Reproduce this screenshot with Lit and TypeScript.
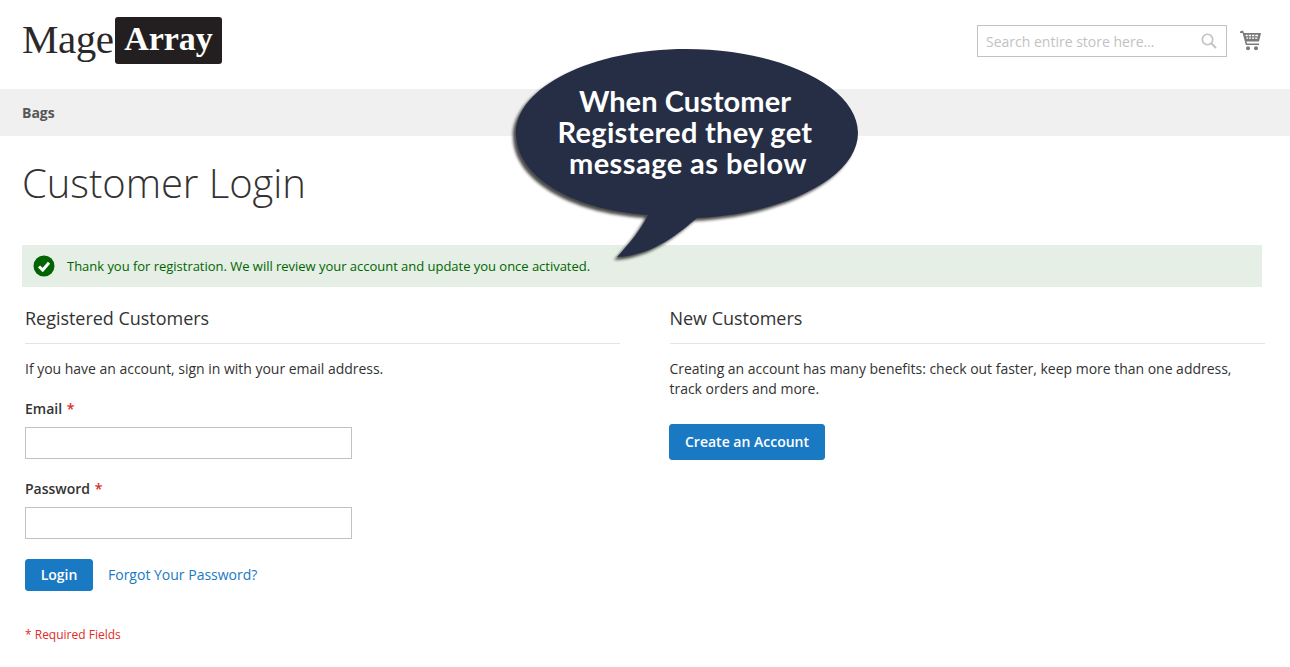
import { LitElement, html, css } from 'lit';
import { customElement } from 'lit/decorators.js';

@customElement('app-root')
export class AppRoot extends LitElement {
  static styles = css`
    :host {
      display: block;
      position: relative;
      height: 667px;
      overflow: hidden;
      background: #fff;
      color: #333;
      font-family: "Open Sans", sans-serif;
      font-size: 14px;
      line-height: 20px;
    }

    .header {
      height: 89px;
      padding: 17px 29px 0 22px;
      box-sizing: border-box;
      display: flex;
      justify-content: space-between;
      align-items: flex-start;
    }

    .logo {
      display: flex;
      align-items: flex-start;
      font-family: "Liberation Serif", serif;
    }

    .logo-mage {
      font-size: 41px;
      line-height: 45px;
      letter-spacing: -0.5px;
      color: #2b2829;
      width: 93px;
    }

    .logo-array {
      width: 107px;
      height: 47px;
      background: #231f20;
      border-radius: 3px;
      color: #fff;
      font-size: 34px;
      font-weight: 700;
      line-height: 43px;
      text-align: center;
    }

    .tools {
      display: flex;
      align-items: center;
      gap: 13px;
      margin-top: 8px;
    }

    .search {
      width: 250px;
      height: 32px;
      box-sizing: border-box;
      border: 1px solid #c2c2c2;
      padding: 1px 9px 0 8px;
      display: flex;
      align-items: center;
      justify-content: space-between;
      color: #c2c2c2;
      font-size: 14px;
    }

    .search svg {
      margin-top: -2px;
    }

    .cart {
      margin-top: -2px;
    }

    .nav {
      height: 47px;
      background: #f0f0f0;
      padding: 0 22px;
      display: flex;
      align-items: center;
      font-weight: 700;
      color: #575757;
    }

    h1 {
      margin: 0;
      padding: 18px 22px 0;
      height: 109px;
      box-sizing: border-box;
      font-size: 40px;
      line-height: 57px;
      font-weight: 300;
      letter-spacing: -0.05px;
      color: #333;
    }

    .message {
      margin: 0 28px 0 22px;
      height: 42px;
      background: #e5efe5;
      color: #006400;
      font-size: 13px;
      letter-spacing: -0.025px;
      padding-left: 11px;
      display: flex;
      align-items: center;
      gap: 12px;
    }

    .columns {
      display: grid;
      grid-template-columns: 595px 595.5px;
      column-gap: 49.5px;
      padding: 0 25px;
    }

    h2 {
      margin: 0;
      padding: 20px 0 13px;
      font-size: 18px;
      line-height: 23px;
      font-weight: 400;
      letter-spacing: -0.03px;
      border-bottom: 1px solid #e4e4e4;
    }

    p {
      margin: 15px 0 0;
      letter-spacing: -0.02px;
    }

    label {
      display: block;
      margin-top: 20px;
      font-weight: 600;
    }

    label span {
      color: #e02b27;
      margin-left: 1px;
    }

    .input {
      width: 327px;
      height: 32px;
      box-sizing: border-box;
      border: 1px solid #c2c2c2;
      margin-top: 8px;
      background: #fff;
    }

    .actions {
      display: flex;
      align-items: center;
      gap: 15px;
      margin-top: 20px;
    }

    .btn {
      display: inline-flex;
      align-items: center;
      justify-content: center;
      width: 68px;
      height: 32px;
      background: #1979c3;
      border: 1px solid #1979c3;
      border-radius: 3px;
      box-sizing: border-box;
      color: #fff;
      font-weight: 600;
      white-space: nowrap;
    }

    .btn.create {
      height: 36px;
      margin-top: 25px;
      width: 156px;
      margin-left: -0.5px;
    }

    a {
      color: #1979c3;
      text-decoration: none;
    }

    .required {
      margin-top: 34px;
      font-size: 12px;
      color: #e02b27;
    }

    .bubble {
      position: absolute;
      left: 505px;
      top: 42px;
      width: 365px;
      height: 225px;
      filter: drop-shadow(-3px 3px 1.5px rgba(0, 0, 0, 0.7));
    }

    .bubble-text {
      position: absolute;
      left: 515px;
      top: 85px;
      width: 340px;
      text-align: center;
      color: #fff;
      font-family: Lato, sans-serif;
      font-size: 29px;
      line-height: 31px;
      font-weight: 700;
      letter-spacing: 0.3px;
    }

    .bubble-text .first {
      letter-spacing: 0.05px;
    }

    .bubble-text .shift {
      margin-left: 6px;
      letter-spacing: 0.45px;
    }
  `;

  render() {
    return html`
      <div class="header">
        <div class="logo">
          <span class="logo-mage">Mage</span>
          <span class="logo-array">Array</span>
        </div>
        <div class="tools">
          <div class="search">
            <span>Search entire store here...</span>
            <svg width="16" height="16" viewBox="0 0 16 16" fill="none" stroke="#c2c2c2" stroke-width="1.6">
              <circle cx="6.5" cy="6.5" r="5.2"></circle>
              <path d="M10.4 10.4 15 15" stroke-width="2"></path>
            </svg>
          </div>
          <svg class="cart" width="21" height="21" viewBox="0 0 21 21" fill="#7a7a7a">
            <path d="M0 1.5 3 .5 4 3h17l-2 8.5H6.5L7 13.5h12V15H5.8L2.6 3 0 3z"></path>
            <path d="M5.5 4.8h2.2v1.4H5.8zM8.7 4.8h2.4v1.4H8.7zM12 4.8h2.4v1.4H12zM15.3 4.8h2.9l-.3 1.4h-2.6zM6.2 7.4h1.9v1.4H6.6zM9 7.4h2.1v1.4H9zM12 7.4h2.2v1.4H12zM15.1 7.4h2.5l-.3 1.4h-2.2z" fill="#fff"></path>
            <circle cx="8" cy="18.3" r="2"></circle>
            <circle cx="16" cy="18.3" r="2"></circle>
          </svg>
        </div>
      </div>
      <div class="nav">Bags</div>
      <h1>Customer Login</h1>
      <div class="message">
        <svg width="22" height="22" viewBox="0 0 22 22">
          <circle cx="11" cy="11" r="10.5" fill="#006400"></circle>
          <path d="M6 11.5 9.7 15 16 7.8" fill="none" stroke="#fff" stroke-width="3"></path>
        </svg>
        <span>Thank you for registration. We will review your account and update you once activated.</span>
      </div>
      <div class="columns">
        <div class="login">
          <h2>Registered Customers</h2>
          <p>If you have an account, sign in with your email address.</p>
          <label>Email <span>*</span></label>
          <div class="input"></div>
          <label>Password <span>*</span></label>
          <div class="input"></div>
          <div class="actions">
            <span class="btn">Login</span>
            <a href="#">Forgot Your Password?</a>
          </div>
          <div class="required">* Required Fields</div>
        </div>
        <div>
          <h2>New Customers</h2>
          <p>Creating an account has many benefits: check out faster, keep more than one address, track orders and more.</p>
          <span class="btn create">Create an Account</span>
        </div>
      </div>
      <svg class="bubble" viewBox="505 42 365 225">
        <path d="M686 49C781 49 858 87 858 133C858 178 783 214 697 218C680 232 655 255 617 257C630 243 642 228 648 215C572 210 516 177 516 133C516 87 592 49 686 49Z" fill="#262e45"></path>
      </svg>
      <div class="bubble-text"><span class="first">When Customer</span><br />Registered they get<br /><span class="shift">message as below</span></div>
    `;
  }
}
